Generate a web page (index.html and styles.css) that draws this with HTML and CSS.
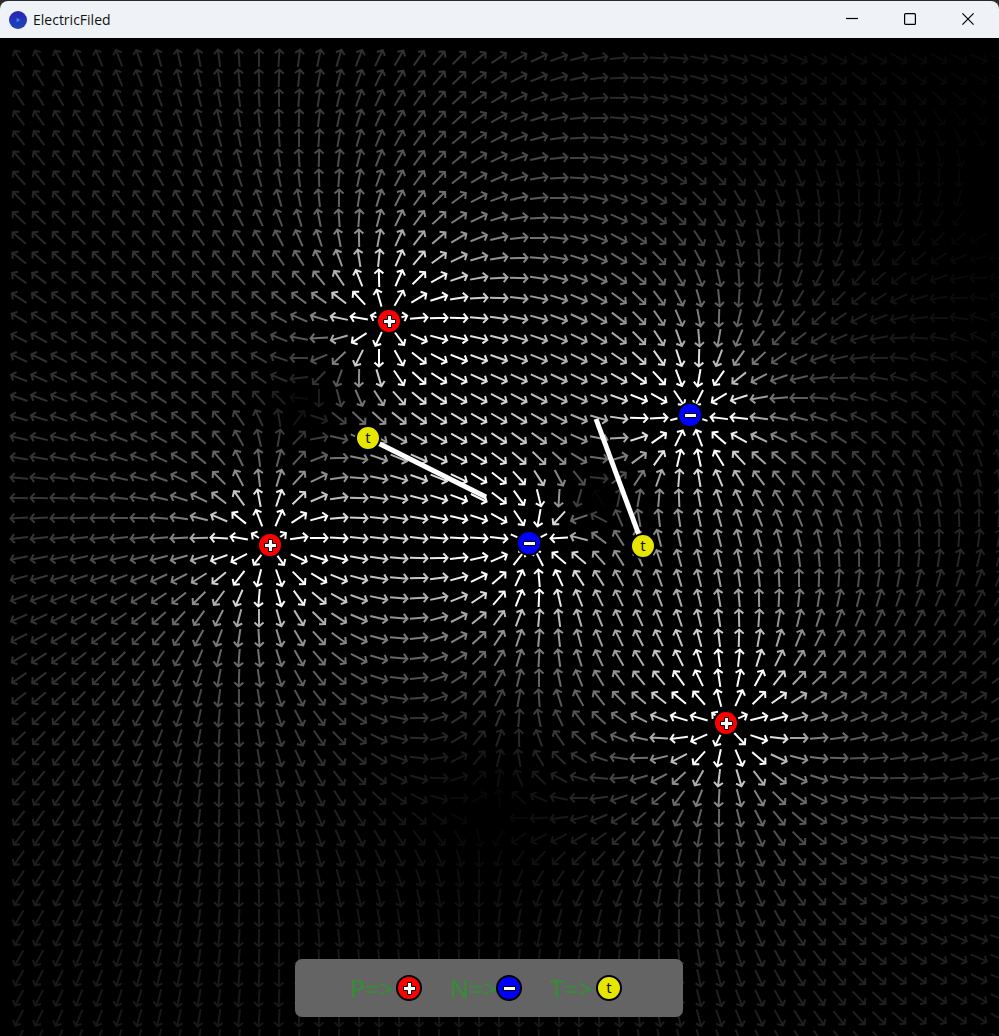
FILE: index.html
```html
<!DOCTYPE html>
<html lang="en">
<head>
<meta charset="utf-8">
<title>ElectricFiled</title>
<link rel="stylesheet" href="styles.css">
</head>
<body>
<div class="window">
  <header class="titlebar">
    <svg class="app-icon" viewBox="0 0 18 18" aria-hidden="true">
      <defs>
        <linearGradient id="orb" x1="0" y1="0" x2="0" y2="1">
          <stop offset="0" stop-color="#2a22b4"/><stop offset="1" stop-color="#1c48b8"/>
        </linearGradient>
      </defs>
      <circle cx="9" cy="9" r="9" fill="url(#orb)"/>
      <path d="M7.6 6.8l3.6 2.2-3.6 2.2z" fill="#3f8df0"/>
    </svg>
    <h1 class="title">ElectricFiled</h1>
    <div class="controls">
      <button class="control" aria-label="Minimize"><svg viewBox="0 0 12 12"><path d="M0 5.5h12"/></svg></button>
      <button class="control" aria-label="Maximize"><svg viewBox="0 0 12 12"><rect x=".6" y=".6" width="10.8" height="10.8" rx="1"/></svg></button>
      <button class="control" aria-label="Close"><svg viewBox="0 0 12 12"><path d="M.4 .4l11.2 11.2M11.6 .4L.4 11.6"/></svg></button>
    </div>
  </header>

  <main class="field">
    <svg class="plot" role="img" aria-label="Electric field of five charges">
      <defs>
        <g id="disc-plus">
          <circle class="plus" r="12"/>
          <path class="glyph" d="M-1.5-5.5h4v4h4v4h-4v4h-4v-4h-4v-4h4z"/>
        </g>
        <g id="disc-minus">
          <circle class="minus" r="12"/>
          <path class="glyph" d="M-5.5-1.5h12v4h-12z"/>
        </g>
      </defs>
      <g id="arrows" class="arrows"></g>
      <g class="vectors">
        <line x1="368" y1="400" x2="486" y2="459"/>
        <line x1="643" y1="508" x2="596" y2="381"/>
      </g>
      <g id="charges"></g>
      <g transform="translate(368 400)"><circle class="test" r="12"/><text class="test-label" y="5">t</text></g>
      <g transform="translate(643 508)"><circle class="test" r="12"/><text class="test-label" y="5">t</text></g>
    </svg>

    <aside class="legend">
      <div class="legend-item"><span>P=&gt;</span><svg class="legend-icon" viewBox="-13 -13 26 26"><use href="#disc-plus"/></svg></div>
      <div class="legend-item"><span>N=&gt;</span><svg class="legend-icon" viewBox="-13 -13 26 26"><use href="#disc-minus"/></svg></div>
      <div class="legend-item"><span>T=&gt;</span><svg class="legend-icon" viewBox="-13 -13 26 26"><circle class="test" r="12"/><text class="test-label" y="5">t</text></svg></div>
    </aside>
  </main>
</div>
<script src="field.js"></script>
</body>
</html>
```
FILE: styles.css
```css
* { box-sizing: border-box; }

body {
  margin: 0;
  background: #2b2b2b;
  font-family: "Noto Sans", "Open Sans", sans-serif;
}

.window {
  display: flex;
  flex-direction: column;
  height: 100vh;
  padding-top: 1px;
}

.titlebar {
  display: flex;
  align-items: center;
  height: 37px;
  flex: none;
  padding: 0 2px 0 9px;
  background: #eff3f7;
  border-radius: 8px 8px 0 0;
}

.app-icon { width: 18px; height: 18px; }

.title {
  margin: 0 0 0 6px;
  font-family: "Open Sans", sans-serif;
  font-size: 14px;
  font-weight: 400;
  line-height: 20px;
  color: #111;
}

.controls { display: flex; margin-left: auto; height: 100%; }

.control {
  display: flex;
  align-items: center;
  justify-content: center;
  width: 58px;
  padding: 0 0 2px;
  border: 0;
  background: none;
}

.control svg {
  width: 12px;
  height: 12px;
  fill: none;
  stroke: #000;
  stroke-width: 1.2;
}

.field {
  position: relative;
  flex: 1;
  min-height: 0;
  overflow: hidden;
  background: #000;
}

.plot { display: block; width: 100%; height: 100%; }

.arrows path { fill: none; stroke-width: 2; }
.vectors line { stroke: #fff; stroke-width: 5; }

.plus, .minus, .test { stroke: #000; stroke-width: 2; }
.plus { fill: #f00; }
.minus { fill: #00f; }
.test { fill: #e6e600; }
.glyph { fill: #fff; stroke: #000; stroke-width: 1; }

.test-label {
  font-family: "Noto Sans", sans-serif;
  font-size: 15px;
  font-weight: 400;
  text-anchor: middle;
  fill: #111;
}

.legend {
  position: absolute;
  left: 295px;
  bottom: 19px;
  display: flex;
  gap: 28px;
  padding: 12px 61px 12px 55px;
  border-radius: 7px;
  background: #646464;
}

.legend-item {
  display: flex;
  align-items: center;
  justify-content: space-between;
  width: 72px;
  height: 34px;
  font-family: "Open Sans", sans-serif;
  font-size: 25px;
  font-weight: 600;
  line-height: 34px;
  color: #3c873c;
}

.legend-item span { width: 46px; white-space: nowrap; }
.legend-icon { position: relative; width: 26px; height: 26px; flex: none; }
```
FILE: field.js
```js
const SVG = "http://www.w3.org/2000/svg";
const STEP = 20;
const GAIN = 13000;
const MIN_LEVEL = 5;

const charges = [
  { x: 389, y: 283, q: 1 },
  { x: 270, y: 507, q: 1 },
  { x: 726, y: 685, q: 1 },
  { x: 690, y: 377, q: -1 },
  { x: 529, y: 505, q: -1 }
];

function fieldAt(x, y) {
  let ex = 0, ey = 0;
  for (const c of charges) {
    const dx = x - c.x, dy = y - c.y;
    const r2 = dx * dx + dy * dy || 1;
    ex += c.q * dx / r2;
    ey += c.q * dy / r2;
  }
  return [ex, ey];
}

const layer = document.getElementById("arrows");

function drawArrows() {
  const { width, height } = layer.ownerSVGElement.getBoundingClientRect();
  layer.replaceChildren();
  for (let y = STEP; y <= height + STEP; y += STEP) {
    for (let x = STEP - 1; x <= width + STEP; x += STEP) {
      const [ex, ey] = fieldAt(x, y);
      const level = Math.min(255, Math.round(Math.hypot(ex, ey) * GAIN));
      if (level < MIN_LEVEL) continue;
      const angle = Math.atan2(ey, ex) * 180 / Math.PI;
      const arrow = document.createElementNS(SVG, "path");
      arrow.setAttribute("d", "M-9 0H8.5M4.5-4.5L8.5 0L4.5 4.5");
      arrow.setAttribute("stroke", `rgb(${level},${level},${level})`);
      arrow.setAttribute("transform", `translate(${x} ${y}) rotate(${angle.toFixed(1)})`);
      layer.append(arrow);
    }
  }
}

for (const c of charges) {
  const disc = document.createElementNS(SVG, "use");
  disc.setAttribute("href", c.q > 0 ? "#disc-plus" : "#disc-minus");
  disc.setAttribute("x", c.x);
  disc.setAttribute("y", c.y);
  document.getElementById("charges").append(disc);
}

drawArrows();
window.addEventListener("resize", drawArrows);
```
